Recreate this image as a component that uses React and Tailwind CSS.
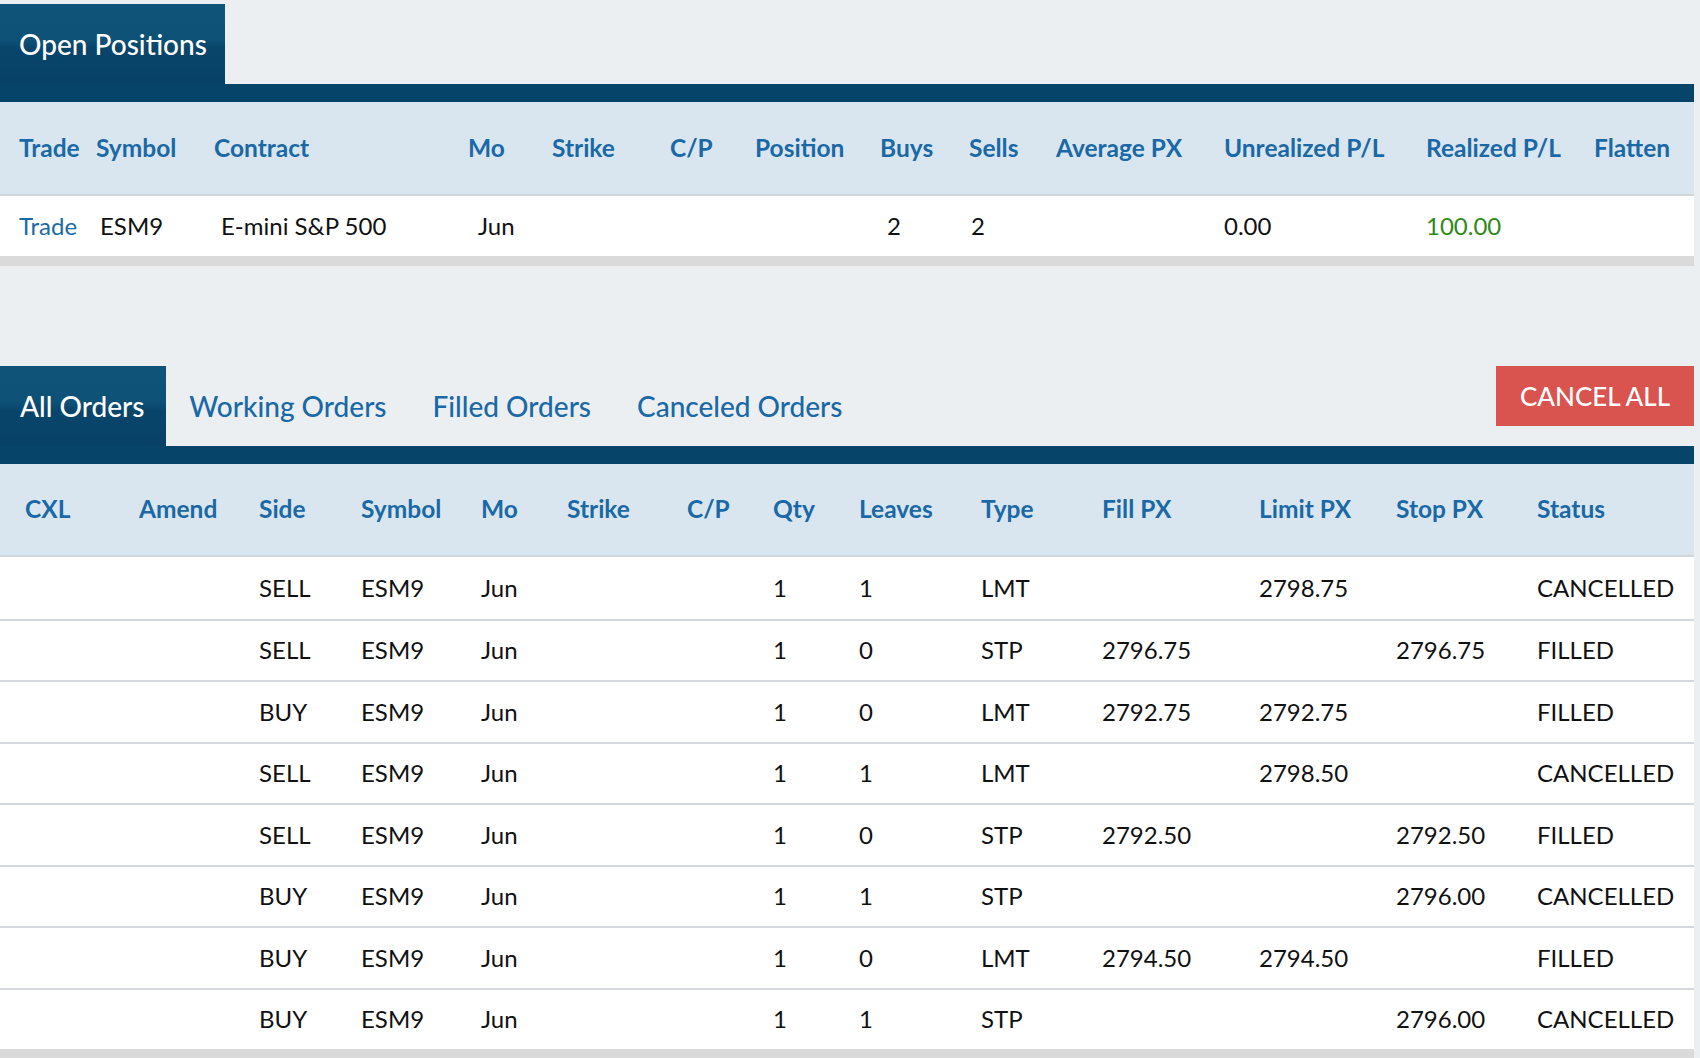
import React from "react";

const posCols = "grid-cols-[77px_118px_254px_84px_118px_85px_125px_89px_87px_168px_202px_168px_1fr]";
const orderCols = "grid-cols-[114px_120px_102px_120px_86px_120px_86px_86px_122px_121px_157px_137px_141px_1fr]";

const posHeaders = ["Trade", "Symbol", "Contract", "Mo", "Strike", "C/P", "Position", "Buys", "Sells", "Average PX", "Unrealized P/L", "Realized P/L", "Flatten"];
const orderHeaders = ["CXL", "Amend", "Side", "Symbol", "Mo", "Strike", "C/P", "Qty", "Leaves", "Type", "Fill PX", "Limit PX", "Stop PX", "Status"];

const orders = [
  ["SELL", "1", "1", "LMT", "", "2798.75", "", "CANCELLED"],
  ["SELL", "1", "0", "STP", "2796.75", "", "2796.75", "FILLED"],
  ["BUY", "1", "0", "LMT", "2792.75", "2792.75", "", "FILLED"],
  ["SELL", "1", "1", "LMT", "", "2798.50", "", "CANCELLED"],
  ["SELL", "1", "0", "STP", "2792.50", "", "2792.50", "FILLED"],
  ["BUY", "1", "1", "STP", "", "", "2796.00", "CANCELLED"],
  ["BUY", "1", "0", "LMT", "2794.50", "2794.50", "", "FILLED"],
  ["BUY", "1", "1", "STP", "", "", "2796.00", "CANCELLED"],
];

const Tab = ({ label, active, className = "" }) => (
  <div
    className={
      active
        ? `h-[80px] flex items-center font-medium bg-[linear-gradient(to_bottom,#10547a_0%,#0e5177_44%,#09456b_56%,#074167_100%)] text-white ${className}`
        : `h-[80px] flex items-center font-medium text-[#1a69a6] ${className}`
    }
  >
    {label}
  </div>
);

export default function App() {
  return (
    <div className="min-h-[1058px] bg-[#ebeff2] pt-[4px] font-['Lato',sans-serif] text-[#111]">
      <div className="w-[1694px]">
        {/* Open positions */}
        <div className="flex text-[28px]">
          <Tab label="Open Positions" active className="pl-[19px] pr-[18px]" />
        </div>
        <div className="h-[18px] bg-[#07446a]" />
        <div className={`grid ${posCols} h-[94px] pl-[19px] items-center bg-[#d9e6f0] border-b-2 border-[#cfd6dc] text-[24.5px] font-bold text-[#1a69a6]`}>
          {posHeaders.map((h) => (
            <div key={h}>{h}</div>
          ))}
        </div>
        <div className={`grid ${posCols} h-[60px] pl-[19px] items-center bg-white text-[24px]`}>
          <div className="text-[#1a69a6]">Trade</div>
          <div className="pl-[4px]">ESM9</div>
          <div className="pl-[7px]">E-mini S&amp;P 500</div>
          <div className="pl-[10px]">Jun</div>
          <div />
          <div />
          <div />
          <div className="pl-[7px]">2</div>
          <div className="pl-[2px]">2</div>
          <div />
          <div>0.00</div>
          <div className="text-[#2f8a14]">100.00</div>
          <div />
        </div>
        <div className="h-[10px] bg-[#dadada]" />

        {/* Orders */}
        <div className="mt-[100px] flex items-start text-[28px]">
          <Tab label="All Orders" active className="pl-[20px] pr-[22px]" />
          <Tab label="Working Orders" className="px-[23px]" />
          <Tab label="Filled Orders" className="px-[23px]" />
          <Tab label="Canceled Orders" className="px-[23px]" />
          <button className="ml-auto h-[60px] w-[198px] bg-[#d9534f] text-white text-[26px] font-medium flex items-center justify-center">
            CANCEL ALL
          </button>
        </div>
        <div className="h-[18px] bg-[#07446a]" />
        <div className={`grid ${orderCols} h-[93px] pl-[25px] items-center bg-[#d9e6f0] border-b-2 border-[#cfd6dc] text-[24.5px] font-bold text-[#1a69a6]`}>
          {orderHeaders.map((h) => (
            <div key={h}>{h}</div>
          ))}
        </div>
        {orders.map((o, i) => (
          <div
            key={i}
            className={`grid ${orderCols} h-[61.5px] pl-[25px] items-center bg-white text-[24px] ${i > 0 ? "border-t-2 border-[#d4d8dc]" : ""}`}
          >
            <div />
            <div />
            <div>{o[0]}</div>
            <div>ESM9</div>
            <div>Jun</div>
            <div />
            <div />
            <div>{o[1]}</div>
            <div>{o[2]}</div>
            <div>{o[3]}</div>
            <div>{o[4]}</div>
            <div>{o[5]}</div>
            <div>{o[6]}</div>
            <div>{o[7]}</div>
          </div>
        ))}
        <div className="h-[10px] bg-[#dadada]" />
      </div>
    </div>
  );
}
